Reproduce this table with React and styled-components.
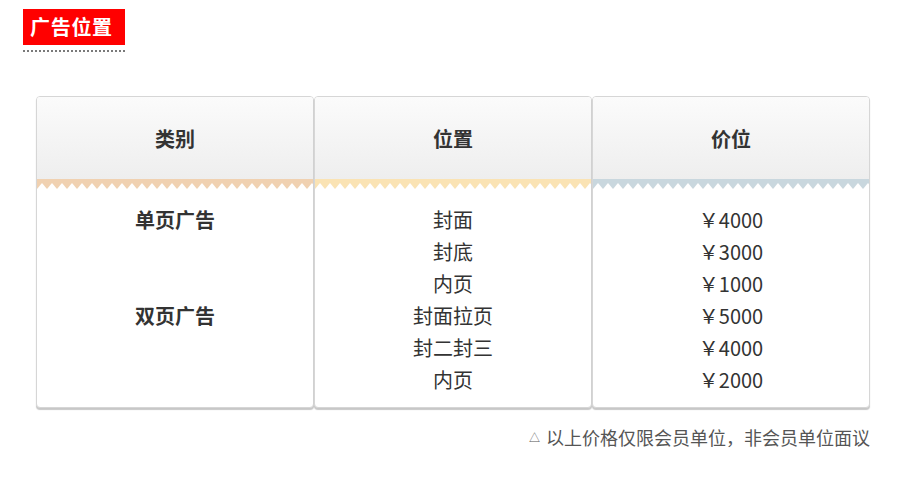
import React from "react";
import styled, { createGlobalStyle } from "styled-components";

const GlobalStyle = createGlobalStyle`
  body {
    margin: 0;
    background: #fff;
    font-family: "Noto Sans CJK SC", "Noto Sans", sans-serif;
    color: #333;
  }
`;

const Page = styled.div`
  width: 903px;
  height: 478px;
  padding: 9px 0 0 23px;
  box-sizing: border-box;
`;

const TitleWrap = styled.div`
  display: inline-block;
  padding-bottom: 5px;
  border-bottom: 2px dotted #7a7a7a;
`;

const Title = styled.h2`
  margin: 0;
  height: 36px;
  width: 102px;
  box-sizing: border-box;
  background: #ff0000;
  color: #fff;
  font-size: 20px;
  font-weight: 700;
  line-height: 36px;
  padding-left: 7px;
  letter-spacing: 0.7px;
`;

const Table = styled.div`
  display: grid;
  grid-template-columns: repeat(3, 1fr);
  width: 834px;
  margin: 44px 0 0 13px;
`;

const Card = styled.div`
  border: 1px solid #d6d6d6;
  border-radius: 4px;
  box-shadow: 0 2px 1px rgba(0, 0, 0, 0.22);
  overflow: hidden;
  background: #fff;
`;

const Head = styled.div`
  height: 82px;
  display: flex;
  align-items: center;
  justify-content: center;
  background: linear-gradient(#fbfbfb, #eeeeee);
  font-size: 20px;
  font-weight: 700;
  color: #333;
`;

const Body = styled.div`
  padding: 15px 0 11px;
  display: flex;
  flex-direction: column;
  align-items: center;
`;

const Cell = styled.div`
  height: 32px;
  line-height: 32px;
  font-size: 20px;
  font-weight: ${(p) => (p.$bold ? 700 : 400)};
  color: #333;
`;

const Note = styled.p`
  margin: 16px 0 0;
  width: 847px;
  text-align: right;
  font-size: 18px;
  color: #555;
`;

const Mark = styled.span`
  font-size: 11px;
  margin-right: 6px;
  vertical-align: 3px;
`;

function Zigzag({ color, id }) {
  return (
    <svg width="100%" height="10" style={{ display: "block" }}>
      <defs>
        <pattern id={id} width="10" height="10" patternUnits="userSpaceOnUse">
          <rect width="10" height="10" fill={color} />
          <path d="M0 10 L5 4 L10 10 Z" fill="#fff" />
        </pattern>
      </defs>
      <rect width="100%" height="10" fill={`url(#${id})`} />
    </svg>
  );
}

const columns = [
  {
    title: "类别",
    color: "#f0d1b1",
    bold: true,
    cells: ["单页广告", "", "", "双页广告", "", ""],
  },
  {
    title: "位置",
    color: "#fae3b4",
    cells: ["封面", "封底", "内页", "封面拉页", "封二封三", "内页"],
  },
  {
    title: "价位",
    color: "#c9d7de",
    cells: ["￥4000", "￥3000", "￥1000", "￥5000", "￥4000", "￥2000"],
  },
];

export default function App() {
  return (
    <>
      <GlobalStyle />
      <Page>
        <TitleWrap>
          <Title>广告位置</Title>
        </TitleWrap>
        <Table>
          {columns.map((col, i) => (
            <Card key={col.title}>
              <Head>{col.title}</Head>
              <Zigzag color={col.color} id={`zz${i}`} />
              <Body>
                {col.cells.map((c, j) => (
                  <Cell key={j} $bold={col.bold}>
                    {c}
                  </Cell>
                ))}
              </Body>
            </Card>
          ))}
        </Table>
        <Note>
          <Mark>△</Mark>以上价格仅限会员单位，非会员单位面议
        </Note>
      </Page>
    </>
  );
}
